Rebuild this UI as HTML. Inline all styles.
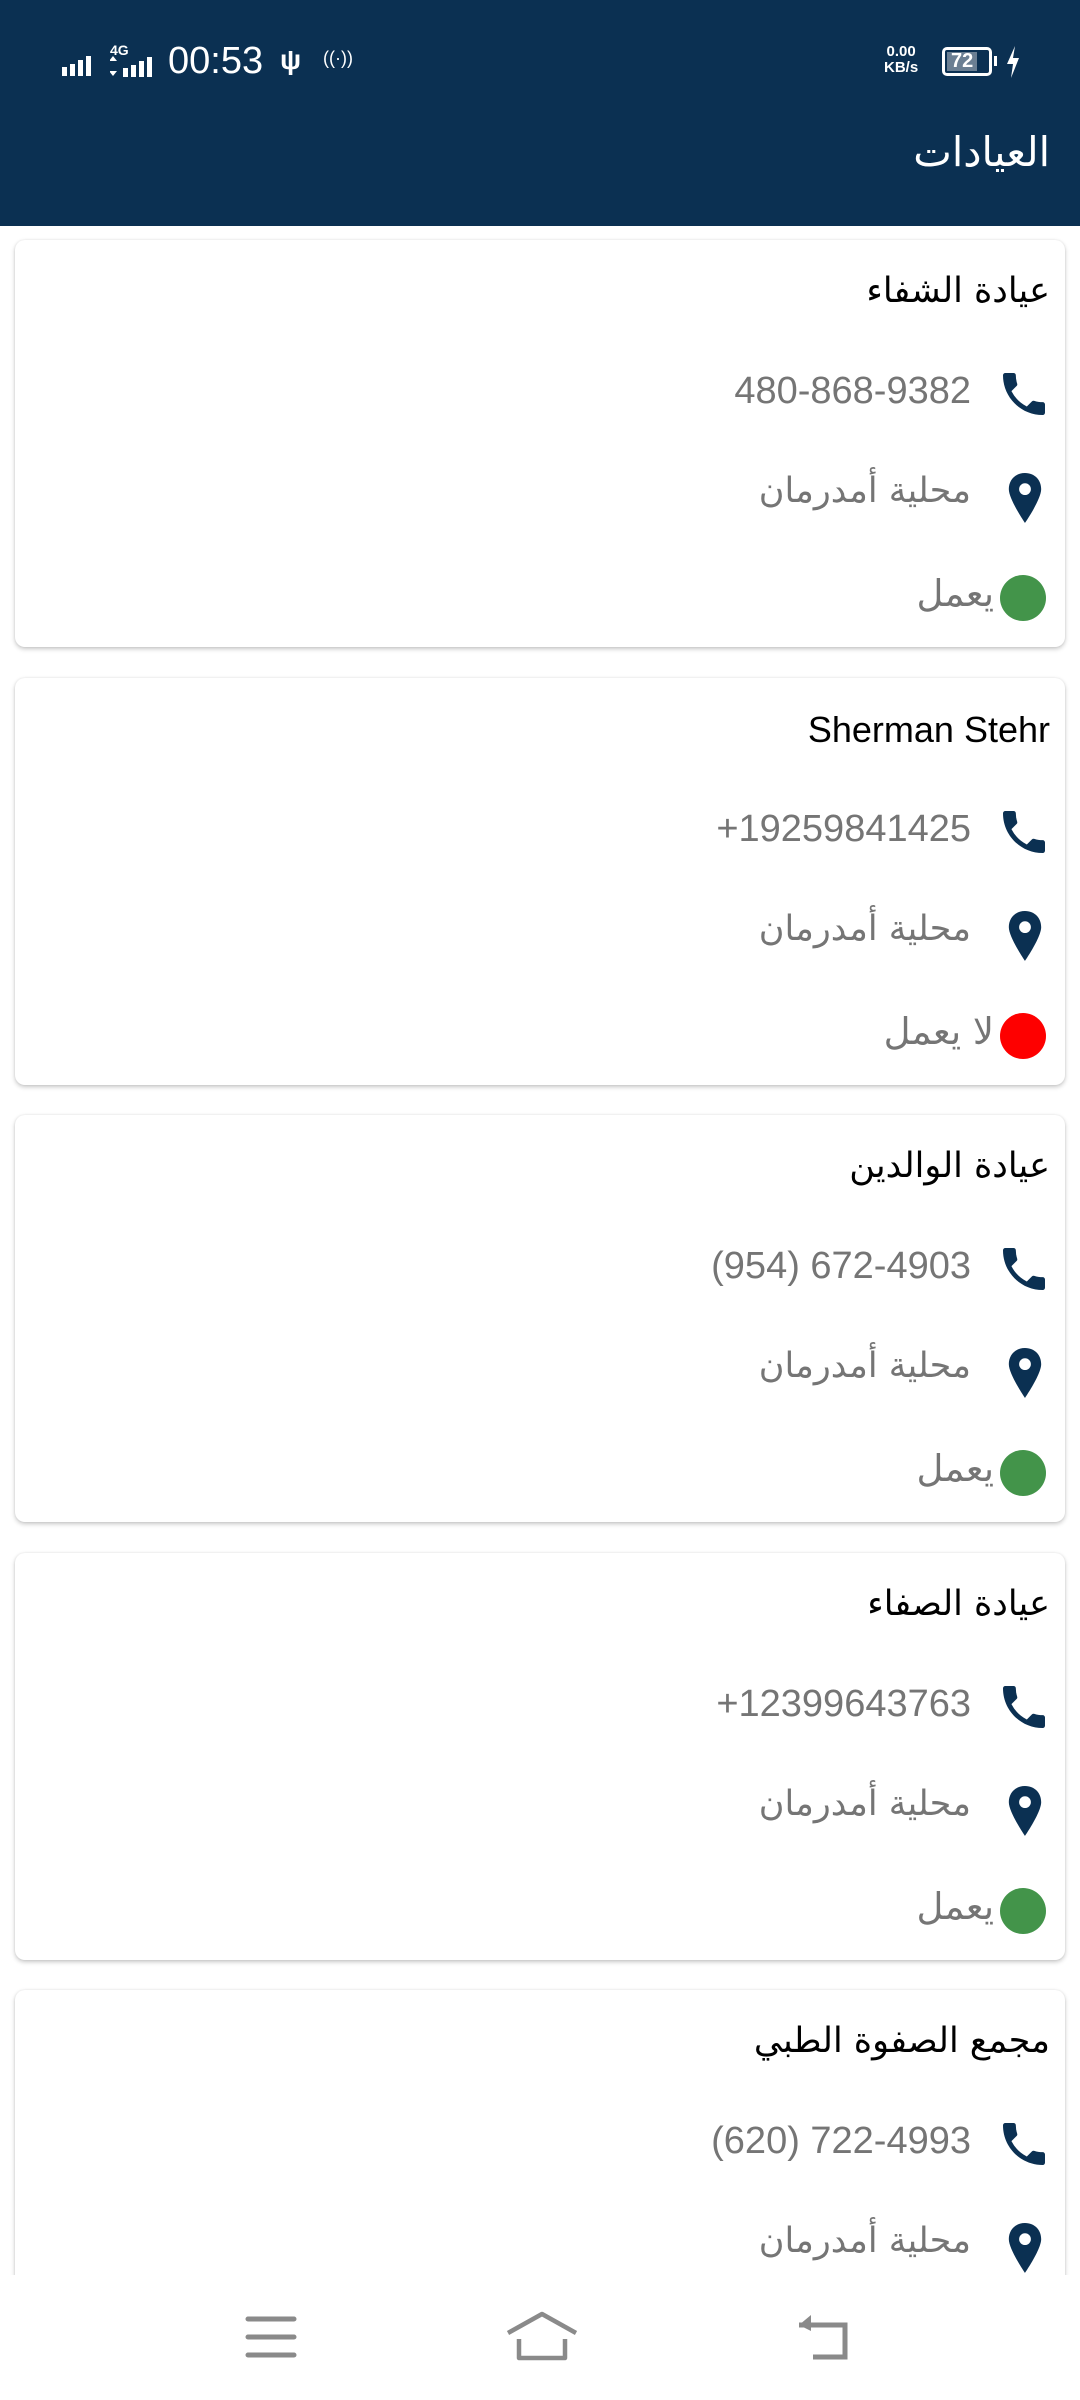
<!DOCTYPE html>
<html><head><meta charset="utf-8"><style>
*{margin:0;padding:0;box-sizing:border-box}
body{width:1080px;height:2400px;background:#fff;position:relative;overflow:hidden;font-family:"DejaVu Sans","Liberation Sans",sans-serif}
.hdr{position:absolute;left:0;top:0;width:1080px;height:226px;background:#0b3052}
.st{position:absolute;color:#fff;font-family:"Liberation Sans",sans-serif;font-weight:bold}
.title{position:absolute;right:30px;top:128px;color:#fff;font-size:41px;direction:rtl}
.card{position:absolute;left:15px;width:1050px;height:407px;background:#fff;border-radius:10px;box-shadow:0 2px 5px rgba(0,0,0,.22),0 0 2px rgba(0,0,0,.08)}
.ct{position:absolute;right:15px;top:31px;font-size:35px;color:#000;direction:rtl}
.ph{position:absolute;right:94px;top:130px;font-size:38px;color:#757575;font-family:"Liberation Sans",sans-serif;direction:ltr}
.loc{position:absolute;right:94px;top:231px;font-size:35px;color:#757575;direction:rtl}
.stt{position:absolute;right:71px;top:332px;font-size:37px;color:#757575;direction:rtl}
.dot{position:absolute;left:985px;top:335px;width:46px;height:46px;border-radius:50%}
.ic1{position:absolute;left:981px;top:126px}
.ic2{position:absolute;left:992px;top:233px}
.nav{position:absolute;left:0;top:2275px;width:1080px;height:125px;background:#fff}
</style></head><body>
<div class="hdr"></div>
<svg style="position:absolute;left:62px;top:52px" width="40" height="24"><rect x="0" y="15" width="5" height="9" fill="#fff"/><rect x="8" y="12" width="5" height="12" fill="#fff"/><rect x="16" y="8" width="5" height="16" fill="#fff"/><rect x="24" y="4" width="5" height="20" fill="#fff"/></svg>
<div class="st" style="left:110px;top:42px;font-size:14px">4G</div>
<svg style="position:absolute;left:110px;top:56px" width="50" height="22"><path d="M3 0l4 5H-1zM3 20l4-5H-1z" fill="#fff"/><rect x="13" y="12" width="5" height="9" fill="#fff"/><rect x="21" y="9" width="5" height="12" fill="#fff"/><rect x="29" y="5" width="5" height="16" fill="#fff"/><rect x="37" y="1" width="5" height="20" fill="#fff"/></svg>
<div class="st" style="left:168px;top:40px;font-size:38px;font-weight:normal">00:53</div>
<div class="st" style="left:280px;top:44px;font-size:28px">ψ</div>
<div class="st" style="left:323px;top:48px;font-size:18px;font-weight:normal">((·))</div>
<div class="st" style="left:884px;top:44px;font-size:15px;line-height:16px;text-align:center">0.00<br>KB/s</div>
<div style="position:absolute;left:942px;top:47px;width:50px;height:29px;border:3px solid #fff;border-radius:5px"><div style="position:absolute;left:2px;top:2px;width:30px;height:19px;background:#6b7f93"></div><div class="st" style="left:6px;top:0;font-size:20px">72</div></div>
<div style="position:absolute;left:994px;top:56px;width:3px;height:10px;background:#fff"></div>
<svg style="position:absolute;left:1005px;top:46px" width="16" height="32"><path d="M10 0L2 18h6l-2 14 8-20H8z" fill="#fff"/></svg>
<div class="title">العيادات</div>

<div class="card" style="top:240px"><div class="ct">عيادة الشفاء</div>
<svg class="ic1" width="56" height="56" viewBox="0 0 24 24"><path d="M20 15.5c-1.25 0-2.45-.2-3.570-.57a1 1 0 0 0-1.02.24l-2.2 2.2a15.07 15.07 0 0 1-6.59-6.59l2.2-2.21a.96.96 0 0 0 .25-1A11.36 11.36 0 0 1 8.5 4a1 1 0 0 0-1-1H4a1 1 0 0 0-1 1c0 9.39 7.61 17 17 17a1 1 0 0 0 1-1v-3.5a1 1 0 0 0-1-1z" fill="#0b3052"/></svg><div class="ph">480-868-9382</div>
<svg class="ic2" width="36" height="50" viewBox="0 0 24 34"><path d="M12 0C5.4 0 1 4.8 1 11c0 7 11 23 11 23s11-16 11-23C23 4.8 18.6 0 12 0zm0 15a4 4 0 1 1 0-8 4 4 0 0 1 0 8z" fill="#0b3052"/></svg><div class="loc">محلية أمدرمان</div>
<div class="dot" style="background:#43944a"></div><div class="stt">يعمل</div></div>

<div class="card" style="top:678px"><div class="ct" style="font-family:'Liberation Sans',sans-serif;font-size:36px">Sherman Stehr</div>
<svg class="ic1" width="56" height="56" viewBox="0 0 24 24"><path d="M20 15.5c-1.25 0-2.45-.2-3.57-.57a1 1 0 0 0-1.02.24l-2.2 2.2a15.07 15.07 0 0 1-6.59-6.59l2.2-2.21a.96.96 0 0 0 .25-1A11.36 11.36 0 0 1 8.5 4a1 1 0 0 0-1-1H4a1 1 0 0 0-1 1c0 9.39 7.61 17 17 17a1 1 0 0 0 1-1v-3.5a1 1 0 0 0-1-1z" fill="#0b3052"/></svg><div class="ph">+19259841425</div>
<svg class="ic2" width="36" height="50" viewBox="0 0 24 34"><path d="M12 0C5.4 0 1 4.8 1 11c0 7 11 23 11 23s11-16 11-23C23 4.8 18.6 0 12 0zm0 15a4 4 0 1 1 0-8 4 4 0 0 1 0 8z" fill="#0b3052"/></svg><div class="loc">محلية أمدرمان</div>
<div class="dot" style="background:#fe0000"></div><div class="stt">لا يعمل</div></div>

<div class="card" style="top:1115px"><div class="ct">عيادة الوالدين</div>
<svg class="ic1" width="56" height="56" viewBox="0 0 24 24"><path d="M20 15.5c-1.25 0-2.45-.2-3.57-.57a1 1 0 0 0-1.02.24l-2.2 2.2a15.07 15.07 0 0 1-6.59-6.59l2.2-2.21a.96.96 0 0 0 .25-1A11.36 11.36 0 0 1 8.5 4a1 1 0 0 0-1-1H4a1 1 0 0 0-1 1c0 9.39 7.61 17 17 17a1 1 0 0 0 1-1v-3.5a1 1 0 0 0-1-1z" fill="#0b3052"/></svg><div class="ph">(954) 672-4903</div>
<svg class="ic2" width="36" height="50" viewBox="0 0 24 34"><path d="M12 0C5.4 0 1 4.8 1 11c0 7 11 23 11 23s11-16 11-23C23 4.8 18.6 0 12 0zm0 15a4 4 0 1 1 0-8 4 4 0 0 1 0 8z" fill="#0b3052"/></svg><div class="loc">محلية أمدرمان</div>
<div class="dot" style="background:#43944a"></div><div class="stt">يعمل</div></div>

<div class="card" style="top:1553px"><div class="ct">عيادة الصفاء</div>
<svg class="ic1" width="56" height="56" viewBox="0 0 24 24"><path d="M20 15.5c-1.25 0-2.45-.2-3.57-.57a1 1 0 0 0-1.02.24l-2.2 2.2a15.07 15.07 0 0 1-6.59-6.59l2.2-2.21a.96.96 0 0 0 .25-1A11.36 11.36 0 0 1 8.5 4a1 1 0 0 0-1-1H4a1 1 0 0 0-1 1c0 9.39 7.61 17 17 17a1 1 0 0 0 1-1v-3.5a1 1 0 0 0-1-1z" fill="#0b3052"/></svg><div class="ph">+12399643763</div>
<svg class="ic2" width="36" height="50" viewBox="0 0 24 34"><path d="M12 0C5.4 0 1 4.8 1 11c0 7 11 23 11 23s11-16 11-23C23 4.8 18.6 0 12 0zm0 15a4 4 0 1 1 0-8 4 4 0 0 1 0 8z" fill="#0b3052"/></svg><div class="loc">محلية أمدرمان</div>
<div class="dot" style="background:#43944a"></div><div class="stt">يعمل</div></div>

<div class="card" style="top:1990px"><div class="ct">مجمع الصفوة الطبي</div>
<svg class="ic1" width="56" height="56" viewBox="0 0 24 24"><path d="M20 15.5c-1.25 0-2.45-.2-3.57-.57a1 1 0 0 0-1.02.24l-2.2 2.2a15.07 15.07 0 0 1-6.59-6.59l2.2-2.21a.96.96 0 0 0 .25-1A11.36 11.36 0 0 1 8.5 4a1 1 0 0 0-1-1H4a1 1 0 0 0-1 1c0 9.39 7.61 17 17 17a1 1 0 0 0 1-1v-3.5a1 1 0 0 0-1-1z" fill="#0b3052"/></svg><div class="ph">(620) 722-4993</div>
<svg class="ic2" width="36" height="50" viewBox="0 0 24 34"><path d="M12 0C5.4 0 1 4.8 1 11c0 7 11 23 11 23s11-16 11-23C23 4.8 18.6 0 12 0zm0 15a4 4 0 1 1 0-8 4 4 0 0 1 0 8z" fill="#0b3052"/></svg><div class="loc">محلية أمدرمان</div>
<div class="dot" style="background:#43944a"></div><div class="stt">يعمل</div></div>

<div class="nav">
<svg style="position:absolute;left:245px;top:40px" width="52" height="44"><g stroke="#8a8a8a" stroke-width="5" stroke-linecap="round"><path d="M3 4h46M3 22h46M3 40h46"/></g></svg>
<svg style="position:absolute;left:505px;top:36px" width="74" height="50"><path d="M3 22L37 3l34 19M14 28v19h46V28" fill="none" stroke="#8a8a8a" stroke-width="4.5" stroke-linejoin="round"/></svg>
<svg style="position:absolute;left:795px;top:38px" width="56" height="48"><path d="M4 12h46v32H18" fill="none" stroke="#8a8a8a" stroke-width="5"/><path d="M16 2L4 12l12 6z" fill="#8a8a8a"/></svg>
</div>
</body></html>
